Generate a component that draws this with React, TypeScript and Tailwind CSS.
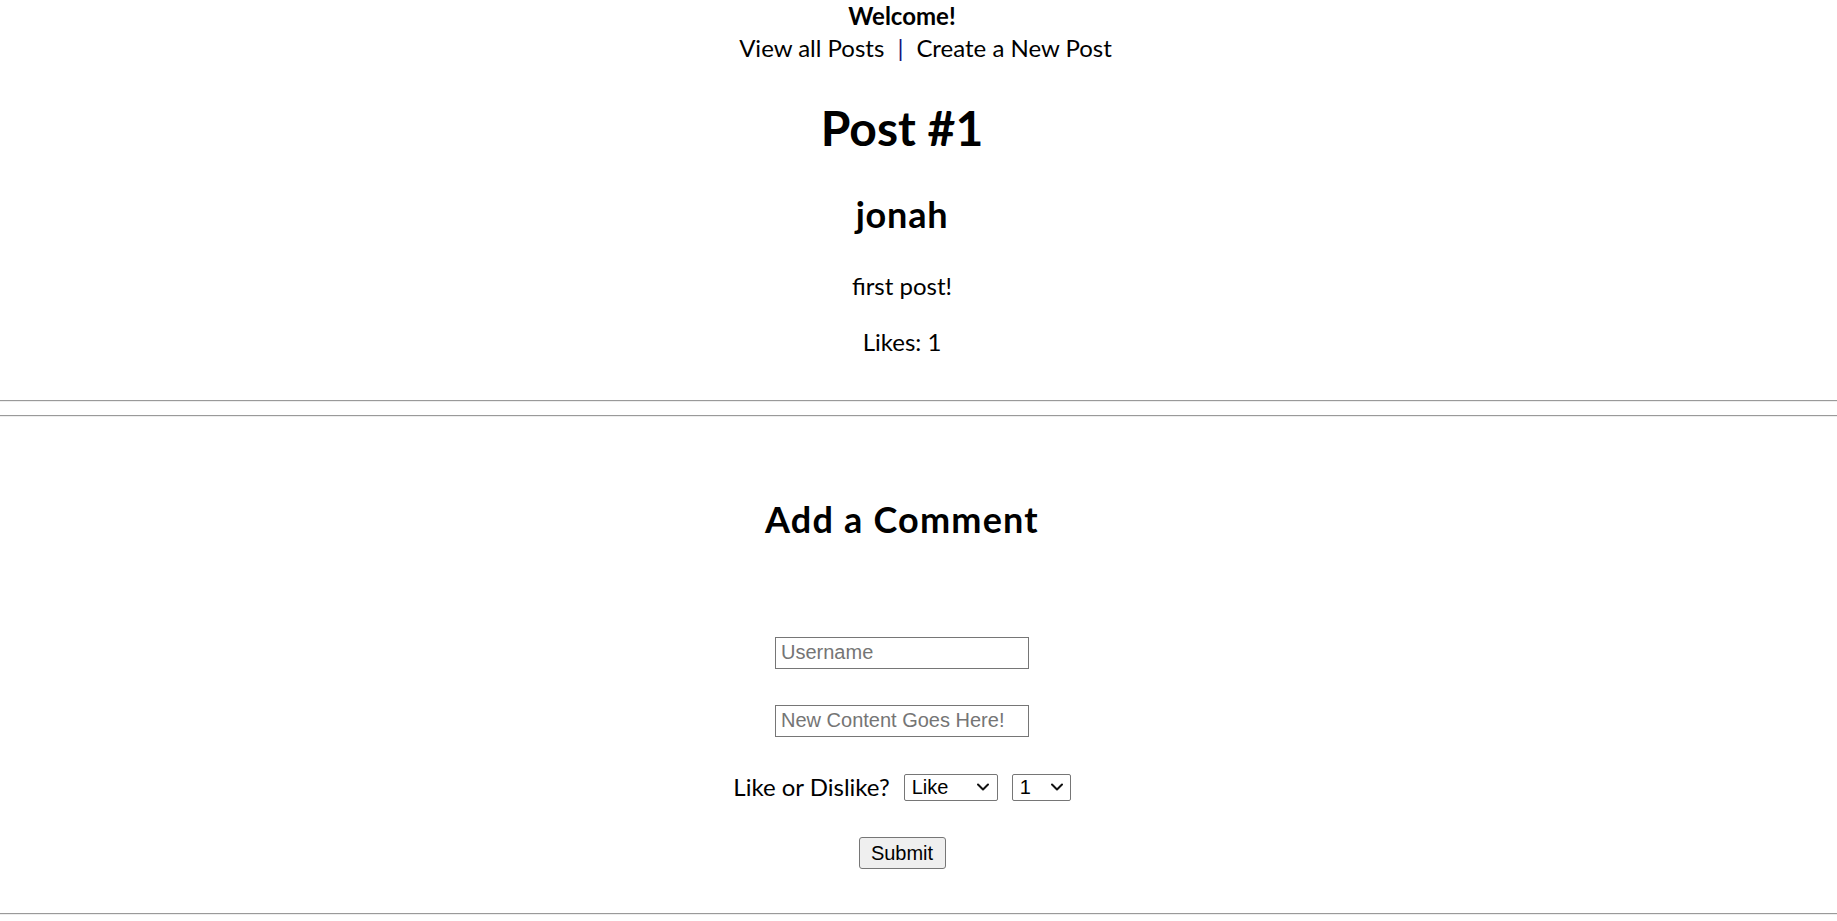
import React from "react";

function Chevron() {
  return (
    <svg width="12" height="8" viewBox="0 0 12 8" className="shrink-0">
      <polyline points="1,1.5 6,6.5 11,1.5" fill="none" stroke="#111" strokeWidth="2" strokeLinecap="round" strokeLinejoin="round" />
    </svg>
  );
}

function Rule({ className = "" }: { className?: string }) {
  return <div className={`w-full border-t border-t-[#9a9a9a] border-b border-b-[#eeeeee] ${className}`} />;
}

export default function App() {
  return (
    <div className="min-h-screen bg-white text-black font-['Lato','Open_Sans',sans-serif]">
      {/* Post */}
      <div className="w-[1804px] flex flex-col items-center text-center">
        <div className="h-8 leading-[32px] text-2xl font-bold">Welcome!</div>
        <nav className="ml-[47px] h-8 leading-[32px] text-2xl flex items-center">
          <span>View all Posts</span>
          <span className="mx-[13px] text-[#14147a]">|</span>
          <span>Create a New Post</span>
        </nav>
        <h1 className="mt-8 h-16 leading-[64px] text-[48px] font-bold">Post #1</h1>
        <h2 className="mt-[30px] h-12 leading-[48px] text-[36px] font-bold tracking-[0.8px]">jonah</h2>
        <p className="mt-[31.5px] h-8 leading-[32px] text-2xl">first post!</p>
        <p className="mt-6 h-8 leading-[32px] text-2xl">Likes: 1</p>
      </div>

      <Rule className="mt-[42.5px]" />
      <Rule className="mt-[13px]" />

      {/* Comment form */}
      <div className="w-[1804px] flex flex-col items-center text-center">
        <h2 className="mt-[77.5px] h-12 leading-[48px] text-[36px] font-bold tracking-[1.2px]">Add a Comment</h2>
        <div className="mt-[94.5px] flex flex-col items-center font-['Liberation_Sans',Arial,sans-serif] text-[20px]">
          <input
            placeholder="Username"
            className="w-[254px] h-[31.5px] px-[5px] border border-[#767676] bg-white placeholder:text-[#757575] outline-none"
          />
          <input
            placeholder="New Content Goes Here!"
            className="mt-[36.5px] w-[254px] h-[31.5px] px-[5px] border border-[#767676] bg-white placeholder:text-[#757575] outline-none"
          />
          <div className="mt-[37px] h-[27px] flex items-center">
            <span className="font-['Lato','Open_Sans',sans-serif] text-2xl">Like or Dislike?</span>
            <div className="ml-[14px] w-[94px] h-[27px] border border-[#767676] rounded-[2px] flex items-center justify-between pl-[7px] pr-[8px]">
              <span>Like</span>
              <Chevron />
            </div>
            <div className="ml-[14px] w-[59px] h-[27px] border border-[#767676] rounded-[2px] flex items-center justify-between pl-[7px] pr-[7px]">
              <span>1</span>
              <Chevron />
            </div>
          </div>
          <button className="mt-[36px] w-[87px] h-[32px] bg-[#efefef] border border-[#767676] rounded-[3px] text-black">
            Submit
          </button>
        </div>
      </div>

      <Rule className="mt-[44px]" />
    </div>
  );
}
